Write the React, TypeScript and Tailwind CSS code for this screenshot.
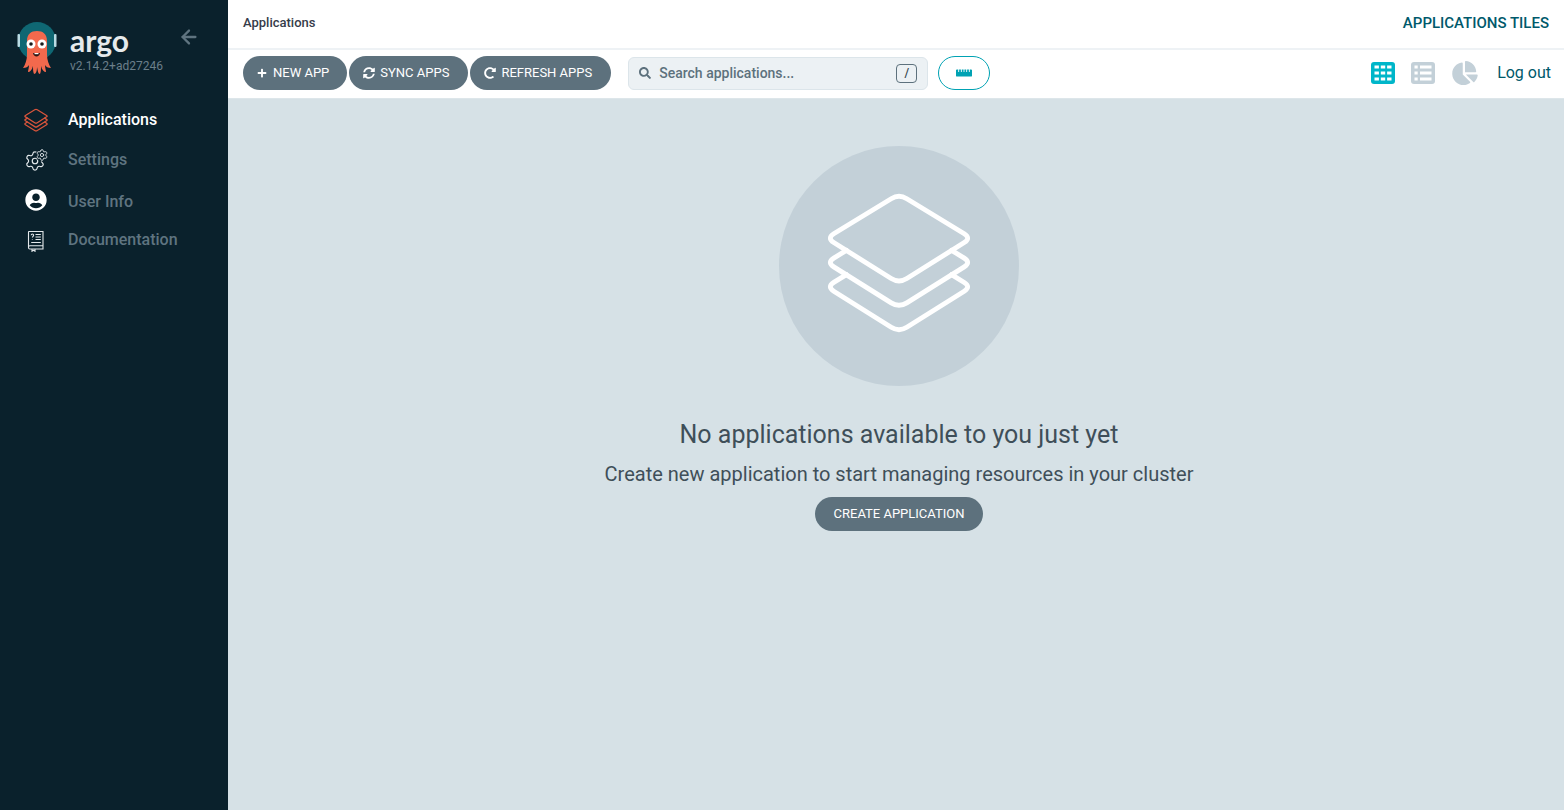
import { ArrowLeft, Settings } from 'lucide-react';
import {
  FaChartPie,
  FaPlus,
  FaRedoAlt,
  FaRulerHorizontal,
  FaSearch,
  FaSyncAlt,
  FaUserCircle,
} from 'react-icons/fa';

function Layers({ className, weight = 5 }: { className?: string; weight?: number }) {
  return (
    <svg viewBox="-3 -3 152 146" fill="none" stroke="currentColor" strokeWidth={weight} strokeLinecap="round" className={className}>
      <path d="M65 5Q73 0 81 5L140 41Q147 45.5 140 50L81 87Q73 92 65 87L6 50Q-1 45.5 6 41Z" />
      <path d="M19 58L6 66Q-1 70.5 6 75L65 112Q73 117 81 112L140 75Q147 70.5 140 66L127 58" />
      <path d="M19 83L6 91Q-1 95.5 6 100L65 137Q73 142 81 137L140 100Q147 95.5 140 91L127 83" />
    </svg>
  );
}

function Octopus() {
  return (
    <svg viewBox="0 0 48 64" className="h-16 w-12 shrink-0">
      <g transform="translate(1 3)">
        <circle cx="24" cy="24" r="19" fill="#0f6773" />
        <rect x="4.5" y="17" width="2.5" height="13" rx="1" fill="#b9dbe4" />
        <rect x="41" y="17" width="2.5" height="13" rx="1" fill="#b9dbe4" />
        <path
          d="M14 24C14 17 18 14 24 14C30 14 34 17 34 24V38C34 43 36 48 38 51C35 51 33 50 32 48C32 51 33 53 33 55C31 55 29 53 28 49C28 52 28 55 27 57C25 57 25 54 24 50C24 54 23 57 21 57C20 55 20 52 20 49C19 53 17 55 15 55C15 53 16 51 16 48C15 50 13 51 10 51C12 48 14 43 14 38Z"
          fill="#f2694d"
        />
        <circle cx="18" cy="27" r="4.5" fill="#fff" />
        <circle cx="29" cy="27" r="4.5" fill="#fff" />
        <circle cx="18" cy="27" r="1.8" fill="#1a1a1a" />
        <circle cx="29" cy="27" r="1.8" fill="#1a1a1a" />
        <path d="M20 36H27C26.5 40.5 20.5 40.5 20 36Z" fill="#2a1512" />
        <path d="M21.5 36H25.5V37.2H21.5Z" fill="#fff" />
      </g>
    </svg>
  );
}

function GearsIcon() {
  return (
    <svg viewBox="0 0 24 24" className="h-6 w-6" fill="none">
      <Settings x="0" y="2" width="22" height="22" color="#e4e9ec" strokeWidth={1.3} />
      <circle cx="18" cy="7" r="6.5" fill="#0a212c" />
      <Settings x="11.5" y="0.5" width="13" height="13" color="#e4e9ec" strokeWidth={1.6} />
    </svg>
  );
}

function DocIcon() {
  return (
    <svg viewBox="0 0 18 22" fill="none" stroke="#e4e9ec" strokeWidth="1.1" className="mt-0.5 h-[22px] w-[18px]">
      <path d="M2 1.5H16V19H2.8C1.8 19 1.5 18.4 1.5 17.6V2C1.5 1.7 1.7 1.5 2 1.5Z" />
      <path d="M1.5 17C1.5 16.2 2 15.8 2.8 15.8H16" />
      <path d="M5 19V21.2L6.5 20.2L8 21.2V19" />
      <path d="M4.2 5.2C4.2 3.6 6.6 3.6 6.6 5.2C6.6 6.4 5.4 6.2 5.4 7.6M5.4 9V9.6" />
      <path d="M8.5 4.5H13.8M8.5 7H13.8M8.5 9.5H13.8M4.2 12.5H13.8" />
    </svg>
  );
}

function TilesIcon() {
  const xs = [3.5, 9.8, 16.1];
  const ys = [3.5, 9.5, 15.5];
  return (
    <svg viewBox="0 0 24 22" className="h-[22px] w-6 text-[#00b6c9]">
      <rect width="24" height="22" rx="3" fill="currentColor" />
      {ys.map((y) => xs.map((x) => <rect key={`${x}-${y}`} x={x} y={y} width="4.4" height="3" fill="#fff" />))}
    </svg>
  );
}

function ListIcon() {
  const ys = [3.5, 9.5, 15.5];
  return (
    <svg viewBox="0 0 24 22" className="h-[22px] w-6 text-[#c3d0d8]">
      <rect width="24" height="22" rx="3" fill="currentColor" />
      {ys.map((y) => (
        <g key={y} fill="#fff">
          <rect x="3.5" y={y} width="3.2" height="3" />
          <rect x="9" y={y} width="11.5" height="3" />
        </g>
      ))}
    </svg>
  );
}

const toolbarButton = 'flex h-[34px] items-center rounded-full bg-[#5d717d] pl-3.5 text-[13px] text-white';

export default function App() {
  return (
    <div className="flex h-screen overflow-hidden bg-[#d6e1e6] font-[Roboto,sans-serif]">
      {/* Sidebar */}
      <aside className="w-[228px] shrink-0 bg-[#0a212c]">
        <div className="flex items-start pl-3 pt-3.5">
          <Octopus />
          <div className="ml-2.5 flex-1 pt-2.5">
            <div className="flex items-center justify-between pr-7">
              <span className="font-[Lato,sans-serif] text-3xl font-bold leading-8 text-[#e6eaec]">argo</span>
              <ArrowLeft size={22} strokeWidth={2.5} className="-mt-1.5 text-[#5f7480]" />
            </div>
            <div className="mt-0.5 text-xs text-[#6b7f8a]">v2.14.2+ad27246</div>
          </div>
        </div>

        <nav className="mt-5.5 flex flex-col text-base font-medium text-[#5f7480]">
          <div className="flex h-10 items-center gap-5 pl-6 text-white">
            <Layers weight={8} className="h-6 w-6 text-[#d9553c]" />
            <span>Applications</span>
          </div>
          <div className="flex h-10 items-center gap-5 pl-6">
            <GearsIcon />
            <span>Settings</span>
          </div>
          <div className="mt-0.5 flex h-10 items-center gap-5 pl-6">
            <div className="flex w-6 justify-center">
              <FaUserCircle className="-mt-1 h-[22px] w-[22px] text-white" />
            </div>
            <span>User Info</span>
          </div>
          <div className="-mt-0.5 flex h-10 items-center gap-5 pl-6">
            <div className="flex w-6 justify-center">
              <DocIcon />
            </div>
            <span>Documentation</span>
          </div>
        </nav>
      </aside>

      <div className="flex min-w-0 flex-1 flex-col">
        {/* Top bar */}
        <header className="flex h-[50px] items-center justify-between border-b-2 border-[#eef2f5] bg-white px-[15px] pb-0.5">
          <span className="text-[13px] font-medium text-[#363c4a]">Applications</span>
          <span className="text-[15px] font-medium text-[#00596b]">APPLICATIONS TILES</span>
        </header>

        {/* Toolbar */}
        <div className="flex h-[49px] items-center border-b border-[#dde6ea] bg-white pb-0.5 pl-[15px] pr-[13px]">
          <div className="flex gap-0.5">
            <button className={`${toolbarButton} gap-1.5 pr-4.5`}>
              <FaPlus className="h-2.5 w-2.5" />
              NEW APP
            </button>
            <button className={`${toolbarButton} gap-[5px] pr-[19px]`}>
              <FaSyncAlt className="h-3 w-3" />
              SYNC APPS
            </button>
            <button className={`${toolbarButton} gap-[5px] pr-[19px]`}>
              <FaRedoAlt className="h-3 w-3" />
              REFRESH APPS
            </button>
          </div>

          <div className="ml-[17px] flex h-[33px] w-[300px] items-center rounded-md border border-[#dce5ea] bg-[#ecf1f4] pl-2.5 pr-[10px]">
            <FaSearch className="h-3 w-3 text-[#5d717d]" />
            <span className="ml-2 flex-1 text-sm font-medium text-[#5d717d]">Search applications...</span>
            <kbd className="flex h-[19px] w-[21px] items-center justify-center rounded-sm border border-[#5d717d] font-[Roboto,sans-serif] text-xs font-medium text-[#36474f]">
              /
            </kbd>
          </div>

          <button className="ml-2.5 flex h-[34px] w-[52px] items-center justify-center rounded-full border border-[#00a2b3] bg-white">
            <FaRulerHorizontal className="h-4 w-4 text-[#00a2b3]" />
          </button>

          <div className="ml-auto flex items-center gap-4">
            <TilesIcon />
            <ListIcon />
            <FaChartPie className="h-6 w-7 text-[#c3d0d8]" />
            <span className="ml-0.5 text-base text-[#00596b]">Log out</span>
          </div>
        </div>

        {/* Empty state */}
        <main className="flex flex-1 flex-col items-center pl-1.5 pt-[47px]">
          <div className="flex h-60 w-60 items-center justify-center rounded-full bg-[#c3d0d8]">
            <Layers className="-mt-2 h-36 w-[148px] text-white" />
          </div>
          <h1 className="mt-8 text-[25px] leading-[34px] text-[#3f4f59]">No applications available to you just yet</h1>
          <p className="mt-2 text-xl leading-7 text-[#3f4f59]">Create new application to start managing resources in your cluster</p>
          <button className="mt-[9px] flex h-[34px] items-center rounded-full bg-[#5d717d] px-[19px] text-[13px] text-white">
            CREATE APPLICATION
          </button>
        </main>
      </div>
    </div>
  );
}
